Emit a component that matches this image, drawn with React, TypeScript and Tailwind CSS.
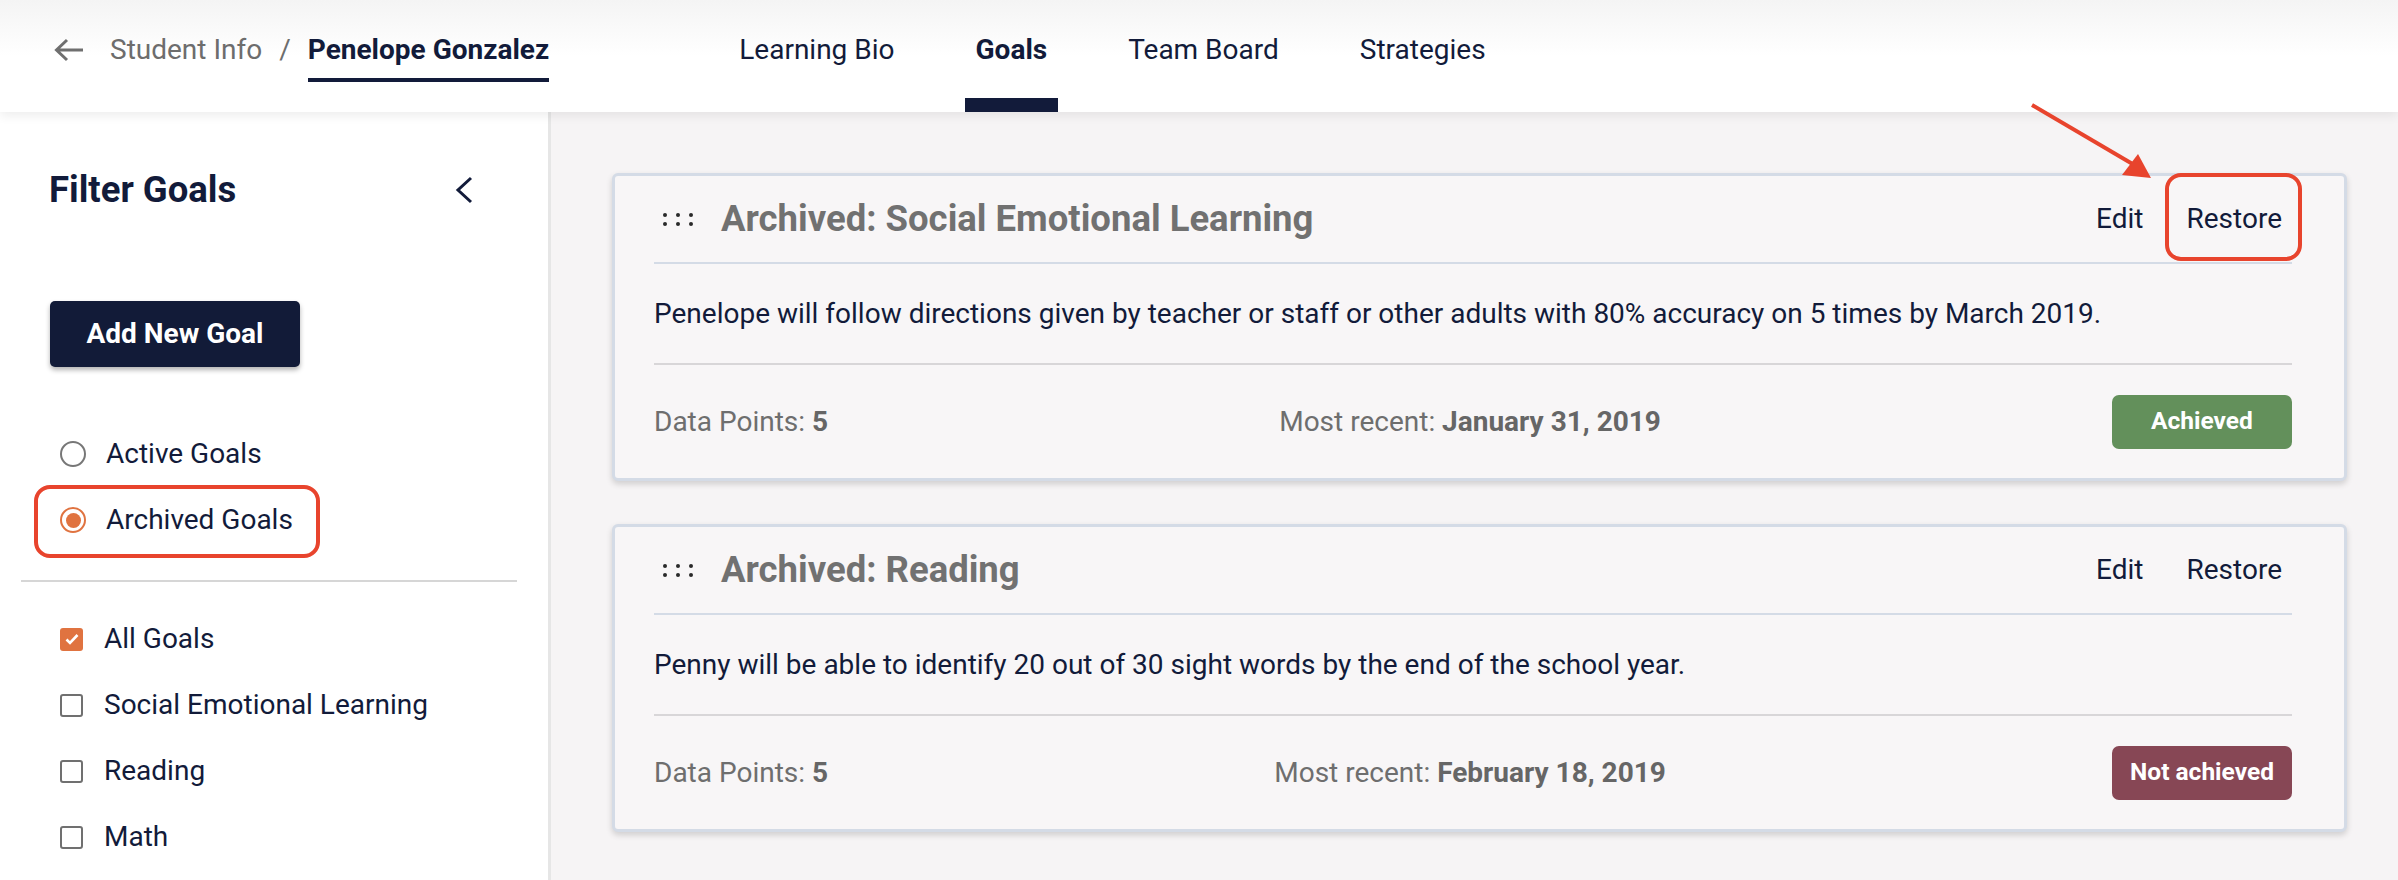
import React from "react";

const navy = "text-[#121b3a]";

type Goal = {
  title: string;
  text: string;
  points: number;
  recent: string;
  status: "achieved" | "not";
  highlight?: boolean;
};

const goals: Goal[] = [
  {
    title: "Archived: Social Emotional Learning",
    text: "Penelope will follow directions given by teacher or staff or other adults with 80% accuracy on 5 times by March 2019.",
    points: 5,
    recent: "January 31, 2019",
    status: "achieved",
    highlight: true,
  },
  {
    title: "Archived: Reading",
    text: "Penny will be able to identify 20 out of 30 sight words by the end of the school year.",
    points: 5,
    recent: "February 18, 2019",
    status: "not",
  },
];

function DragHandle() {
  return (
    <svg width="36" height="20" viewBox="0 0 36 20" className="shrink-0">
      {[5, 18, 31].map((x) => (
        <g key={x} fill="#2a2a2a">
          <circle cx={x} cy="6" r="2" />
          <circle cx={x} cy="15" r="2" />
        </g>
      ))}
    </svg>
  );
}

function GoalCard({ goal }: { goal: Goal }) {
  return (
    <div className="rounded-[6px] border-[3px] border-[#d4dbe6] bg-[#f8f6f7] shadow-[0_3px_6px_rgba(0,0,0,0.16)] pl-[39px] pr-[52px]">
      <div className="flex h-[88px] items-center border-b-2 border-[#d4dbe6]">
        <div className="ml-[6px] flex items-center gap-[25px]">
          <DragHandle />
          <h2 className="text-[36.5px] font-bold leading-none text-[#717171]">{goal.title}</h2>
        </div>
        <div className={`ml-auto mr-[10px] flex items-center gap-[43px] text-[28px] ${navy}`}>
          <span>Edit</span>
          <span className="relative">
            Restore
            {goal.highlight && (
              <span className="absolute -left-[22px] -right-[20px] -top-[25px] -bottom-[21px] rounded-[16px] border-[4px] border-[#e8442d]" />
            )}
          </span>
        </div>
      </div>
      <div className={`flex h-[101px] items-center border-b-2 border-[#d8d6d8] text-[28px] ${navy}`}>
        {goal.text}
      </div>
      <div className="flex h-[113px] items-center justify-between text-[28px] text-[#6e6e6e]">
        <span>
          Data Points: <b className="font-bold text-[#666]">{goal.points}</b>
        </span>
        <span>
          Most recent: <b className="font-bold text-[#666]">{goal.recent}</b>
        </span>
        <span
          className={`flex h-[54px] w-[180px] items-center justify-center rounded-[7px] text-[24.5px] font-bold text-white ${
            goal.status === "achieved" ? "bg-[#63905b]" : "bg-[#874755]"
          }`}
        >
          {goal.status === "achieved" ? "Achieved" : "Not achieved"}
        </span>
      </div>
    </div>
  );
}

function Radio({ label, checked }: { label: string; checked?: boolean }) {
  return (
    <div className="relative flex h-[66px] items-center gap-[20px]">
      <span
        className={`flex h-[26px] w-[26px] items-center justify-center rounded-full border-2 ${
          checked ? "border-[#e07340]" : "border-[#777]"
        }`}
      >
        {checked && <span className="h-[15px] w-[15px] rounded-full bg-[#e07340]" />}
      </span>
      <span>{label}</span>
      {checked && (
        <span className="absolute -left-[26px] top-[-2px] h-[73px] w-[286px] rounded-[16px] border-[4px] border-[#e8442d]" />
      )}
    </div>
  );
}

function Check({ label, checked }: { label: string; checked?: boolean }) {
  return (
    <div className="flex h-[66px] items-center gap-[21px]">
      {checked ? (
        <span className="flex h-[23px] w-[23px] items-center justify-center rounded-[3px] bg-[#e07340]">
          <svg width="16" height="16" viewBox="0 0 16 16">
            <path d="M2.5 8.5l3.5 3.5 7.5-8" stroke="#fff" strokeWidth="2.6" fill="none" />
          </svg>
        </span>
      ) : (
        <span className="h-[23px] w-[23px] rounded-[3px] border-2 border-[#707070]" />
      )}
      <span>{label}</span>
    </div>
  );
}

export default function App() {
  return (
    <div className="relative flex h-[880px] w-[2398px] flex-col overflow-hidden font-[Roboto,sans-serif]">
      {/* top bar */}
      <header className="relative z-10 flex h-[112px] shrink-0 items-stretch bg-gradient-to-b from-[#f4f4f4] via-white to-white shadow-[0_4px_10px_rgba(0,0,0,0.07)] text-[28px] leading-[32px]">
        <div className="flex items-start pl-[54px] pt-[34px]">
          <svg width="30" height="24" viewBox="0 0 30 24" className="mt-[4px]">
            <path d="M29 12H3M13 2L2.5 12 13 22" stroke="#6f6f6f" strokeWidth="3" fill="none" />
          </svg>
          <span className="ml-[26px] text-[#6d6d6d]">Student Info</span>
          <span className="ml-[17px] text-[#6d6d6d]">/</span>
          <span className={`ml-[17px] border-b-[4px] border-[#121b3a] pb-[12px] font-bold ${navy}`}>
            Penelope Gonzalez
          </span>
        </div>
        <nav className={`ml-[179px] flex gap-[59px] ${navy}`}>
          {["Learning Bio", "Goals", "Team Board", "Strategies"].map((t) => (
            <div key={t} className="flex flex-col pt-[34px]">
              <span className={`px-[11px] ${t === "Goals" ? "font-bold" : ""}`}>{t}</span>
              <span className={`mt-auto h-[14px] ${t === "Goals" ? "bg-[#121b3a]" : ""}`} />
            </div>
          ))}
        </nav>
      </header>

      <div className="flex flex-1">
        {/* sidebar */}
        <aside className={`flex w-[551px] shrink-0 flex-col border-r-[3px] border-[#e6e6e6] bg-white text-[28px] ${navy}`}>
          <div className="ml-[49px] mt-[56px] flex h-[44px] w-[425px] items-center justify-between">
            <h1 className="text-[36.5px] font-bold leading-none">Filter Goals</h1>
            <svg width="20" height="28" viewBox="0 0 20 28">
              <path d="M17 2L4 14l13 12" stroke="#121b3a" strokeWidth="3" fill="none" />
            </svg>
          </div>
          <button className="ml-[50px] mt-[89px] h-[66px] w-[250px] rounded-[5px] bg-[#121b38] font-bold text-white shadow-[0_3px_5px_rgba(0,0,0,0.3)]">
            Add New Goal
          </button>
          <div className="ml-[60px] mt-[54px]">
            <Radio label="Active Goals" />
            <Radio label="Archived Goals" checked />
          </div>
          <div className="ml-[21px] mt-[27px] h-[2px] w-[496px] bg-[#d6d6d6]" />
          <div className="ml-[60px] mt-[24px]">
            <Check label="All Goals" checked />
            <Check label="Social Emotional Learning" />
            <Check label="Reading" />
            <Check label="Math" />
          </div>
        </aside>

        {/* goal list */}
        <main className="flex flex-1 flex-col gap-[43px] bg-[#f6f4f5] pl-[61px] pr-[51px] pt-[61px]">
          {goals.map((g) => (
            <GoalCard key={g.title} goal={g} />
          ))}
        </main>
      </div>

      {/* annotation arrow */}
      <svg className="pointer-events-none absolute left-[2020px] top-[95px] z-20" width="150" height="95" viewBox="0 0 150 95">
        <path d="M12 10L116 71" stroke="#e8442d" strokeWidth="4" />
        <path d="M131 83L102 80L118 59Z" fill="#e8442d" />
      </svg>
    </div>
  );
}
